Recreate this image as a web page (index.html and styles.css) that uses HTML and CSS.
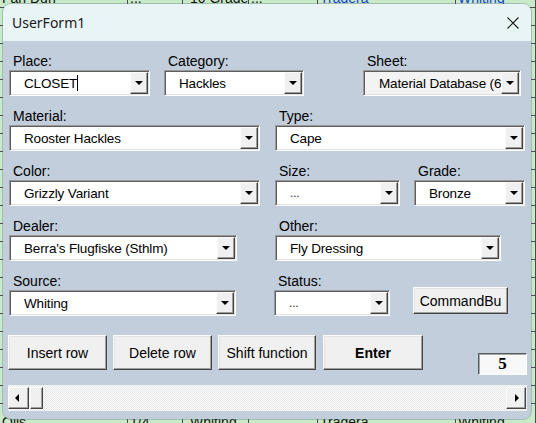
FILE: index.html
```html
<!DOCTYPE html>
<html lang="en">
<head>
    <meta charset="UTF-8">
    <meta name="viewport" content="width=device-width, initial-scale=1.0">
    <title>UserForm1</title>
    <link rel="stylesheet" href="styles.css">
</head>
<body>
    <!-- worksheet behind the form -->
    <div class="sheet">
        <div class="sheet-row"><span>Fan Dun</span><span>...</span><span>10 Grade</span><span>...</span><span class="link">Tradera</span><span class="link">Whiting</span></div>
        <div class="sheet-row"><span></span><span></span><span></span><span></span><span></span><span></span></div>
        <div class="sheet-row"><span></span><span></span><span></span><span></span><span></span><span></span></div>
        <div class="sheet-row"><span></span><span></span><span></span><span></span><span></span><span></span></div>
        <div class="sheet-row"><span></span><span></span><span></span><span></span><span></span><span></span></div>
        <div class="sheet-row"><span></span><span></span><span></span><span></span><span></span><span></span></div>
        <div class="sheet-row"><span></span><span></span><span></span><span></span><span></span><span></span></div>
        <div class="sheet-row"><span></span><span></span><span></span><span></span><span></span><span></span></div>
        <div class="sheet-row"><span></span><span></span><span></span><span></span><span></span><span></span></div>
        <div class="sheet-row"><span></span><span></span><span></span><span></span><span></span><span></span></div>
        <div class="sheet-row"><span></span><span></span><span></span><span></span><span></span><span></span></div>
        <div class="sheet-row"><span></span><span></span><span></span><span></span><span></span><span></span></div>
        <div class="sheet-row"><span></span><span></span><span></span><span></span><span></span><span></span></div>
        <div class="sheet-row"><span></span><span></span><span></span><span></span><span></span><span></span></div>
        <div class="sheet-row"><span></span><span></span><span></span><span></span><span></span><span></span></div>
        <div class="sheet-row"><span></span><span></span><span></span><span></span><span></span><span></span></div>
        <div class="sheet-row"><span></span><span></span><span></span><span></span><span></span><span></span></div>
        <div class="sheet-row"><span></span><span></span><span></span><span></span><span></span><span></span></div>
        <div class="sheet-row"><span></span><span></span><span></span><span></span><span></span><span></span></div>
        <div class="sheet-row"><span></span><span></span><span></span><span></span><span></span><span></span></div>
        <div class="sheet-row"><span></span><span></span><span></span><span></span><span></span><span></span></div>
        <div class="sheet-row"><span></span><span></span><span></span><span></span><span></span><span></span></div>
        <div class="sheet-row"><span></span><span></span><span></span><span></span><span></span><span></span></div>
        <div class="sheet-row sheet-last"><span>Olis</span><span>1/4</span><span>Whiting</span><span>...</span><span>Tradera</span><span>Whiting</span></div>
    </div>

    <div class="window">
        <div class="titlebar">
            <span class="title">UserForm1</span>
            <svg class="close" width="12" height="12" viewBox="0 0 12 12">
                <path d="M0.5 0.5 L11.5 11.5 M11.5 0.5 L0.5 11.5" stroke="#1b1b1b" stroke-width="1.1" fill="none"/>
            </svg>
        </div>

        <div class="form">
            <div class="row">
                <div class="field f-place">
                    <label>Place:</label>
                    <div class="combo"><span class="value">CLOSET<i class="caret"></i></span><span class="drop"></span></div>
                </div>
                <div class="field f-category">
                    <label>Category:</label>
                    <div class="combo"><span class="value">Hackles</span><span class="drop"></span></div>
                </div>
                <div class="field f-sheet">
                    <label>Sheet:</label>
                    <div class="combo combo-gray"><span class="value">Material Database (6</span><span class="drop"></span></div>
                </div>
            </div>

            <div class="row">
                <div class="field f-wide">
                    <label>Material:</label>
                    <div class="combo"><span class="value">Rooster Hackles</span><span class="drop"></span></div>
                </div>
                <div class="field f-type">
                    <label>Type:</label>
                    <div class="combo"><span class="value">Cape</span><span class="drop"></span></div>
                </div>
            </div>

            <div class="row">
                <div class="field f-wide">
                    <label>Color:</label>
                    <div class="combo"><span class="value">Grizzly Variant</span><span class="drop"></span></div>
                </div>
                <div class="field f-size">
                    <label>Size:</label>
                    <div class="combo"><span class="value dots">...</span><span class="drop"></span></div>
                </div>
                <div class="field f-grade">
                    <label>Grade:</label>
                    <div class="combo"><span class="value">Bronze</span><span class="drop"></span></div>
                </div>
            </div>

            <div class="row">
                <div class="field f-dealer">
                    <label>Dealer:</label>
                    <div class="combo"><span class="value">Berra's Flugfiske (Sthlm)</span><span class="drop"></span></div>
                </div>
                <div class="field f-other">
                    <label>Other:</label>
                    <div class="combo"><span class="value">Fly Dressing</span><span class="drop"></span></div>
                </div>
            </div>

            <div class="row">
                <div class="field f-source">
                    <label>Source:</label>
                    <div class="combo"><span class="value">Whiting</span><span class="drop"></span></div>
                </div>
                <div class="field f-status">
                    <label>Status:</label>
                    <div class="combo"><span class="value dots">...</span><span class="drop"></span></div>
                </div>
                <button class="btn btn-command">CommandBu</button>
            </div>

            <div class="actions">
                <button class="btn btn-insert">Insert row</button>
                <button class="btn btn-delete">Delete row</button>
                <button class="btn btn-shift">Shift function</button>
                <button class="btn btn-enter">Enter</button>
                <div class="counter">5</div>
            </div>

            <div class="scrollbar">
                <span class="sb-btn sb-left"></span>
                <span class="sb-thumb"></span>
                <span class="sb-track"></span>
                <span class="sb-btn sb-right"></span>
            </div>
        </div>
    </div>
</body>
</html>
```

FILE: styles.css
```css
* {
    margin: 0;
    padding: 0;
    box-sizing: border-box;
}

body {
    width: 536px;
    height: 423px;
    overflow: hidden;
    position: relative;
    background: #c8eac8;
    font-family: 'Liberation Sans', Arial, sans-serif;
}

/* Worksheet in the background */
.sheet {
    margin-top: -10px;
}

.sheet-row {
    display: flex;
    height: 18px;
    border-bottom: 1px solid #4a4a4a;
    font-size: 14px;
    line-height: 17px;
    color: #111;
}

.sheet-row span {
    padding-left: 2px;
    border-right: 1px solid #4a4a4a;
    white-space: nowrap;
    overflow: hidden;
}

.sheet-row span:nth-child(1) { width: 128px; }
.sheet-row span:nth-child(2) { width: 55px; }
.sheet-row span:nth-child(3) { width: 66px; padding-left: 7px; }
.sheet-row span:nth-child(4) { width: 69px; }
.sheet-row span:nth-child(5) { width: 138px; }
.sheet-row span:nth-child(6) { width: 80px; }

.sheet-row .link {
    color: #1a3fd0;
}

.sheet-last {
    height: 30px;
    line-height: 36px;
}

/* Form window */
.window {
    position: absolute;
    left: 3px;
    top: 4px;
    width: 528px;
    height: 415px;
    border-radius: 8px;
    overflow: hidden;
    background: #c2cedb;
    box-shadow: 0 0 0 1px rgba(90, 110, 120, 0.35);
}

.titlebar {
    height: 37px;
    background: #e8f4f6;
    display: flex;
    align-items: center;
    justify-content: space-between;
    padding: 0 12px 0 9px;
}

.title {
    font-family: 'Noto Sans', 'Open Sans', sans-serif;
    font-size: 14px;
    color: #1a1a1a;
    padding-bottom: 1px;
}

.close {
    display: block;
    margin-top: 1px;
}

.form {
    padding: 11px 0 0 6px;
}

.row {
    display: flex;
    margin-bottom: 11px;
}

.field label {
    display: block;
    height: 18px;
    line-height: 18px;
    padding-left: 4px;
    font-size: 14px;
    color: #000;
}

.f-place { width: 141px; }
.f-category { width: 140px; margin-left: 14px; }
.f-sheet { width: 158px; margin-left: 59px; }
.f-wide { width: 251px; }
.f-type { width: 250px; margin-left: 15px; }
.f-size { width: 125px; margin-left: 15px; }
.f-grade { width: 111px; margin-left: 14px; }
.f-dealer { width: 228px; }
.f-other { width: 226px; margin-left: 38px; }
.f-source { width: 227px; }
.f-status { width: 116px; margin-left: 38px; }

/* Combo box with sunken border */
.combo {
    display: flex;
    height: 26px;
    padding: 1px;
    background: #fff;
    border: 1px solid;
    border-color: #9a9a9a #fdfdfd #fdfdfd #9a9a9a;
    box-shadow: inset 1px 1px 0 #5e5e5e, inset -1px -1px 0 #e2e2e2;
}

.combo-gray {
    background: #f3f3f3;
}

.combo .value {
    flex: 1;
    overflow: hidden;
    white-space: nowrap;
    padding: 1px 0 0 13px;
    line-height: 21px;
    font-size: 13.5px;
    letter-spacing: -0.15px;
    color: #000;
}

.combo-gray .value {
    padding-left: 14px;
}

.combo .dots {
    font-size: 12px;
    padding-left: 13px;
    color: #333;
}

.caret {
    display: inline-block;
    width: 1px;
    height: 16px;
    background: #000;
    vertical-align: -3px;
}

/* Raised drop-down button */
.drop {
    position: relative;
    flex: none;
    width: 18px;
    height: 22px;
    background: #f0f0f0;
    border: 1px solid;
    border-color: #fbfbfb #424242 #424242 #fbfbfb;
    box-shadow: inset -1px -1px 0 #9c9c9c;
}

.drop::after {
    content: "";
    position: absolute;
    left: 4px;
    top: 8px;
    border-left: 4px solid transparent;
    border-right: 4px solid transparent;
    border-top: 4px solid #000;
}

/* Command buttons */
.btn {
    font-family: 'Liberation Sans', Arial, sans-serif;
    font-size: 14px;
    color: #000;
    background: #f0f0f0;
    border: 1px solid;
    border-color: #fbfbfb #454545 #454545 #fbfbfb;
    box-shadow: inset -1px -1px 0 #a0a0a0, inset 1px 1px 0 #e4e4e4;
}

.btn-command {
    width: 95px;
    height: 27px;
    margin: 15px 0 0 23px;
}

.actions {
    display: flex;
    margin-top: 19px;
}

.actions .btn {
    height: 35px;
}

.btn-insert { width: 99px; margin-left: -1px; }
.btn-delete { width: 99px; margin-left: 6px; }
.btn-shift { width: 98px; margin-left: 6px; }
.btn-enter { width: 100px; margin-left: 7px; font-weight: bold; }

.counter {
    width: 49px;
    height: 22px;
    margin: 18px 0 0 55px;
    background: #f8f8f8;
    border: 1px solid;
    border-color: #5a5a5a #fdfdfd #fdfdfd #5a5a5a;
    box-shadow: inset 1px 1px 0 #a8a8a8;
    text-align: center;
    font-family: 'Liberation Serif', 'Times New Roman', serif;
    font-weight: bold;
    font-size: 17px;
    line-height: 20px;
}

/* Horizontal scroll bar */
.scrollbar {
    display: flex;
    align-items: center;
    width: 519px;
    height: 26px;
    margin: 10px 0 0 -1px;
    background: repeating-conic-gradient(#e6e6e6 0 25%, #fcfcfc 0 50%) 0 0 / 2px 2px;
}

.sb-btn, .sb-thumb {
    position: relative;
    flex: none;
    height: 22px;
    background: #f0f0f0;
    border: 1px solid;
    border-color: #fbfbfb #454545 #454545 #fbfbfb;
    box-shadow: inset -1px -1px 0 #a0a0a0;
}

.sb-btn { width: 21px; }

.sb-thumb {
    width: 13px;
    margin-left: 1px;
}

.sb-track {
    flex: 1;
}

.sb-right {
    width: 20px;
    margin-right: 1px;
}

.sb-btn::after {
    content: "";
    position: absolute;
    top: 6px;
    border-top: 4px solid transparent;
    border-bottom: 4px solid transparent;
}

.sb-left::after {
    left: 6px;
    border-right: 4px solid #000;
}

.sb-right::after {
    left: 8px;
    border-left: 4px solid #000;
}
```
